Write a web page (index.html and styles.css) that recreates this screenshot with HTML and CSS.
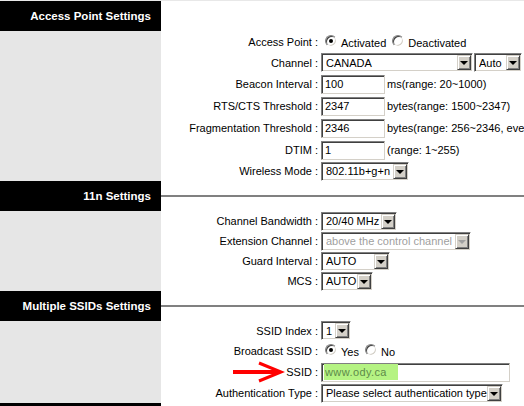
FILE: index.html
```html
<!DOCTYPE html>
<html lang="en">
<head>
    <meta charset="UTF-8">
    <title>Wireless LAN</title>
    <link rel="stylesheet" href="styles.css">
</head>
<body>
    <div class="page">
        <!-- Access Point -->
        <div class="group">
            <div class="group-head first">
                <h3>Access Point Settings</h3>
                <span class="rule"></span>
            </div>
            <div class="group-body">
                <div class="side"></div>
                <div class="fields">
                    <div class="row">
                        <span class="label">Access Point :</span>
                        <span class="field">
                            <span class="option"><span class="radio checked"></span>Activated</span>
                            <span class="option next"><span class="radio"></span>Deactivated</span>
                        </span>
                    </div>
                    <div class="row">
                        <span class="label">Channel :</span>
                        <span class="field">
                            <span class="select channel-select"><span class="value">CANADA</span><span class="arrow"></span></span>
                            <span class="select auto-select"><span class="value">Auto</span><span class="arrow"></span></span>
                        </span>
                    </div>
                    <div class="row tall">
                        <span class="label">Beacon Interval :</span>
                        <span class="field">
                            <span class="text-box">100</span>
                            <span class="hint">ms(range: 20~1000)</span>
                        </span>
                    </div>
                    <div class="row tall">
                        <span class="label">RTS/CTS Threshold :</span>
                        <span class="field">
                            <span class="text-box">2347</span>
                            <span class="hint">bytes(range: 1500~2347)</span>
                        </span>
                    </div>
                    <div class="row tall">
                        <span class="label">Fragmentation Threshold :</span>
                        <span class="field">
                            <span class="text-box">2346</span>
                            <span class="hint">bytes(range: 256~2346, eve</span>
                        </span>
                    </div>
                    <div class="row tall">
                        <span class="label">DTIM :</span>
                        <span class="field">
                            <span class="text-box">1</span>
                            <span class="hint">(range: 1~255)</span>
                        </span>
                    </div>
                    <div class="row short">
                        <span class="label">Wireless Mode :</span>
                        <span class="field">
                            <span class="select mode-select"><span class="value">802.11b+g+n</span><span class="arrow"></span></span>
                        </span>
                    </div>
                </div>
            </div>
        </div>

        <!-- 11n -->
        <div class="group">
            <div class="group-head">
                <h3>11n Settings</h3>
                <span class="rule"></span>
            </div>
            <div class="group-body">
                <div class="side"></div>
                <div class="fields">
                    <div class="row short">
                        <span class="label">Channel Bandwidth :</span>
                        <span class="field">
                            <span class="select bandwidth-select"><span class="value">20/40 MHz</span><span class="arrow"></span></span>
                        </span>
                    </div>
                    <div class="row short">
                        <span class="label">Extension Channel :</span>
                        <span class="field">
                            <span class="select extension-select disabled"><span class="value">above the control channel</span><span class="arrow"></span></span>
                        </span>
                    </div>
                    <div class="row short">
                        <span class="label">Guard Interval :</span>
                        <span class="field">
                            <span class="select guard-select"><span class="value">AUTO</span><span class="arrow"></span></span>
                        </span>
                    </div>
                    <div class="row short">
                        <span class="label">MCS :</span>
                        <span class="field">
                            <span class="select mcs-select"><span class="value">AUTO</span><span class="arrow"></span></span>
                        </span>
                    </div>
                </div>
            </div>
        </div>

        <!-- SSIDs -->
        <div class="group">
            <div class="group-head">
                <h3>Multiple SSIDs Settings</h3>
                <span class="rule"></span>
            </div>
            <div class="group-body">
                <div class="side"></div>
                <div class="fields">
                    <div class="row first-row">
                        <span class="label">SSID Index :</span>
                        <span class="field">
                            <span class="select index-select"><span class="value">1</span><span class="arrow"></span></span>
                        </span>
                    </div>
                    <div class="row">
                        <span class="label">Broadcast SSID :</span>
                        <span class="field">
                            <span class="option"><span class="radio checked"></span>Yes</span>
                            <span class="option next"><span class="radio"></span>No</span>
                        </span>
                    </div>
                    <div class="row tall">
                        <svg class="pointer" width="56" height="24" viewBox="0 0 56 24">
                            <path d="M1 12 H46" stroke="#ff0000" stroke-width="4" fill="none"/>
                            <path d="M27 3 L49 12 L27 21" stroke="#ff0000" stroke-width="3" fill="none"/>
                        </svg>
                        <span class="label">SSID :</span>
                        <span class="field">
                            <span class="text-box ssid-box"><span class="marked">www.ody.ca</span></span>
                        </span>
                    </div>
                    <div class="row short">
                        <span class="label">Authentication Type :</span>
                        <span class="field">
                            <span class="select auth-select"><span class="value">Please select authentication type</span><span class="arrow"></span></span>
                        </span>
                    </div>
                </div>
            </div>
        </div>

        <!-- next section starts just below the visible area -->
        <div class="group">
            <div class="group-head">
                <h3></h3>
                <span class="rule"></span>
            </div>
        </div>
    </div>
</body>
</html>
```

FILE: styles.css
```css
body {
    margin: 0;
    font-family: 'Liberation Sans', Arial, sans-serif;
    font-size: 11px;
    color: #000;
    background: #fff;
    overflow: hidden;
}
.page {
    width: 524px;
    border-top: 1px solid #e8e8e8;
}
.group-head {
    display: grid;
    grid-template-columns: 161px 1fr;
    align-items: center;
    height: 30px;
}
.group-head h3 {
    margin: 0;
    height: 30px;
    line-height: 30px;
    background: #000;
    color: #fff;
    font-size: 11.5px;
    font-weight: bold;
    text-align: right;
    padding-right: 10px;
}
.group-head .rule {
    height: 2px;
    background: #808080;
}
.group-head.first .rule {
    background: transparent;
}
.group-body {
    display: grid;
    grid-template-columns: 161px 1fr;
}
.side {
    background: #e6e6e6;
}
.fields {
    overflow: hidden;
}
.row {
    position: relative;
    display: flex;
    align-items: center;
    height: 21px;
    white-space: nowrap;
}
.row.tall {
    height: 22px;
}
.row.short {
    height: 20px;
}
.row.first-row {
    height: 19px;
}
.label {
    width: 157px;
    flex: none;
    text-align: right;
}
.field {
    display: flex;
    align-items: center;
    margin-left: 3px;
}

/* radio */
.option {
    display: inline-flex;
    align-items: center;
    padding-top: 2px;
}
.option.next {
    margin-left: 2px;
}
.radio {
    position: relative;
    width: 12px;
    height: 12px;
    box-sizing: border-box;
    margin: 0 4px 3px 4px;
    border-radius: 50%;
    border: 1px solid;
    border-color: #808080 #fff #fff #808080;
    box-shadow: inset 1px 1px #404040, inset -1px -1px #d4d0c8;
    background: #fff;
}
.radio.checked::after {
    content: "";
    position: absolute;
    left: 3px;
    top: 3px;
    width: 4px;
    height: 4px;
    border-radius: 50%;
    background: #000;
}

/* text input */
.text-box {
    display: flex;
    align-items: center;
    box-sizing: border-box;
    width: 64px;
    height: 19px;
    padding: 0 2px 0 3px;
    border: 1px solid;
    border-color: #808080 #d4d0c8 #d4d0c8 #808080;
    box-shadow: inset 1px 1px #404040;
    background: #fff;
}
.hint {
    margin-left: 2px;
}
.ssid-box {
    width: 189px;
    padding-left: 2px;
}
.marked {
    background: #b5f383;
    color: #5d8a4a;
    letter-spacing: 0.4px;
    padding: 2px 11px 2px 1px;
}

/* select */
.select {
    display: flex;
    align-items: center;
    box-sizing: border-box;
    height: 19px;
    padding: 1px 1px 1px 4px;
    border: 1px solid;
    border-color: #808080 #fff #fff #808080;
    box-shadow: inset 1px 1px #404040, inset -1px -1px #d4d0c8;
    background: #fff;
}
.select .value {
    flex: 1;
    min-width: 0;
    overflow: hidden;
}
.select .arrow {
    display: flex;
    align-items: center;
    justify-content: center;
    flex: none;
    box-sizing: border-box;
    width: 14px;
    height: 15px;
    background: #d4d0c8;
    border: 1px solid;
    border-color: #d4d0c8 #404040 #404040 #d4d0c8;
    box-shadow: inset 1px 1px #fff, inset -1px -1px #808080;
}
.select .arrow::after {
    content: "";
    border-top: 4px solid #000;
    border-left: 4px solid transparent;
    border-right: 4px solid transparent;
    margin-top: 1px;
}
.select.disabled {
    color: #a0a0a0;
}
.select.disabled .arrow::after {
    border-top-color: #a0a0a0;
}
.channel-select { width: 152px; }
.auto-select { width: 48px; margin-left: 1px; }
.mode-select { width: 88px; }
.bandwidth-select { width: 76px; }
.extension-select { width: 150px; }
.guard-select { width: 69px; }
.mcs-select { width: 52px; }
.index-select { width: 30px; }
.auth-select { width: 182px; }

/* red annotation arrow */
.pointer {
    position: absolute;
    left: 71px;
    top: -1px;
}
```
